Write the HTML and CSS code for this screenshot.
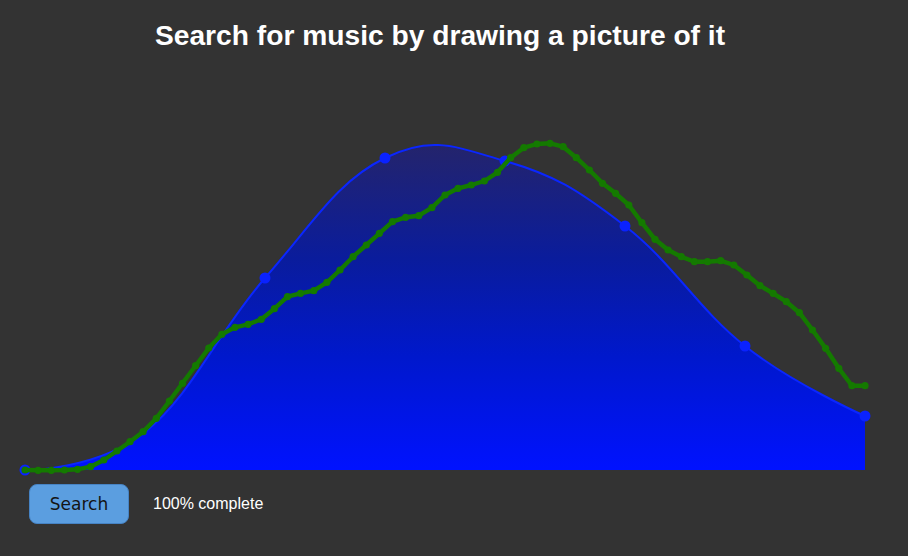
FILE: index.html
```html
<!DOCTYPE html>
<html>
<head>
<meta charset="utf-8">
<title>Search for music by drawing a picture of it</title>
<link rel="stylesheet" href="styles.css">
</head>
<body>
<div class="page">
  <h1 class="title">Search for music by drawing a picture of it</h1>
  <svg class="chart" width="908" height="420" viewBox="0 60 908 420" xmlns="http://www.w3.org/2000/svg">
    <defs>
      <linearGradient id="areaFill" gradientUnits="userSpaceOnUse" x1="0" y1="145" x2="0" y2="470">
        <stop offset="0" stop-color="#24246c"/>
        <stop offset="0.35" stop-color="#0a1c9c"/>
        <stop offset="0.65" stop-color="#0018cc"/>
        <stop offset="1" stop-color="#0012ff"/>
      </linearGradient>
      <marker id="dot" markerUnits="userSpaceOnUse" markerWidth="10" markerHeight="10" refX="5" refY="5" viewBox="0 0 10 10">
        <circle cx="5" cy="5" r="3.6" fill="#147a00"/>
      </marker>
    </defs>
    <path class="area" d="M25,470 C25,470 97,470.4 145,432 C193,393.6 217,332.8 265,278 C313,223.2 337,181.4 385,158 C433,134.6 457,147.4 505,161 C553,174.6 577,189 625,226 C673,263 697,308 745,346 C793,384 865,416 865,416 L865,470 L25,470 Z"/>
    <path class="spline" d="M25,470 C25,470 97,470.4 145,432 C193,393.6 217,332.8 265,278 C313,223.2 337,181.4 385,158 C433,134.6 457,147.4 505,161 C553,174.6 577,189 625,226 C673,263 697,308 745,346 C793,384 865,416 865,416"/>
    <g class="handles">
      <circle cx="25" cy="470" r="5.5"/>
      <circle cx="265" cy="278" r="5.5"/>
      <circle cx="385" cy="158" r="5.5"/>
      <circle cx="505" cy="161" r="5.5"/>
      <circle cx="625" cy="226" r="5.5"/>
      <circle cx="745" cy="346" r="5.5"/>
      <circle cx="865" cy="416" r="5.5"/>
    </g>
    <polyline class="match" marker-start="url(#dot)" marker-mid="url(#dot)" marker-end="url(#dot)" points="25,470 38.1,470.3 51.3,470.3 64.4,470 77.5,469.3 90.6,466.7 103.8,460 116.9,451 130,441.7 143.1,431.7 156.3,418.3 169.4,401 182.5,383.3 195.6,365.7 208.8,348 221.9,334.3 235,327.3 248.1,324.3 261.3,319.3 274.4,308.7 287.5,296.7 300.6,293.3 313.8,290.7 326.9,282.3 340,270 353.1,256.7 366.3,245 379.4,233.3 392.5,221.7 405.6,217.3 418.8,215.7 431.9,207.7 445,195 458.1,188.3 471.3,185 484.4,181 497.5,172.3 510.6,157.7 523.8,147.7 536.9,144 550,143.3 563.1,146.7 576.3,157.7 589.4,170 602.5,183.3 615.6,193.3 628.8,205 641.9,222.7 655,239.3 668.1,250 681.3,256.7 694.4,261.7 707.5,261.7 720.6,260.7 733.8,265 746.9,275 760,285.7 773.1,293.3 786.3,301.7 799.4,312.7 812.5,330 825.6,348.3 838.8,368.3 851.9,385.7 865,385.7"/>
  </svg>
  <div class="controls">
    <button class="search-btn" type="button">Search</button>
    <span class="status">100% complete</span>
  </div>
</div>
</body>
</html>
```
FILE: styles.css
```css
html, body {
  margin: 0;
  padding: 0;
  background: #333333;
}

.page {
  width: 908px;
  height: 556px;
  background: #333333;
  font-family: "Liberation Sans", Arial, Helvetica, sans-serif;
  overflow: hidden;
}

.title {
  margin: 0;
  width: 880px;
  height: 60px;
  box-sizing: border-box;
  padding-top: 19px;
  font-size: 28.2px;
  line-height: 32px;
  font-weight: bold;
  color: #ffffff;
  text-align: center;
}

.chart {
  display: block;
}

.area {
  fill: url(#areaFill);
  stroke: none;
}

.spline {
  fill: none;
  stroke: #0a26ff;
  stroke-width: 2;
}

.handles circle {
  fill: #0a22ff;
}

.match {
  fill: none;
  stroke: #147a00;
  stroke-width: 4.4;
  stroke-linejoin: round;
}

.controls {
  display: flex;
  align-items: center;
  gap: 24px;
  padding: 4px 0 0 29px;
}

.search-btn {
  width: 100px;
  height: 40px;
  box-sizing: border-box;
  border: 1px solid #4683c4;
  border-radius: 8px;
  background: #5b9ee0;
  color: #141414;
  font-family: "DejaVu Sans", "Lucida Grande", sans-serif;
  font-size: 17px;
  padding: 0;
  cursor: pointer;
}

.status {
  color: #ffffff;
  font-size: 16px;
  font-family: "Liberation Sans", Arial, Helvetica, sans-serif;
}
```
